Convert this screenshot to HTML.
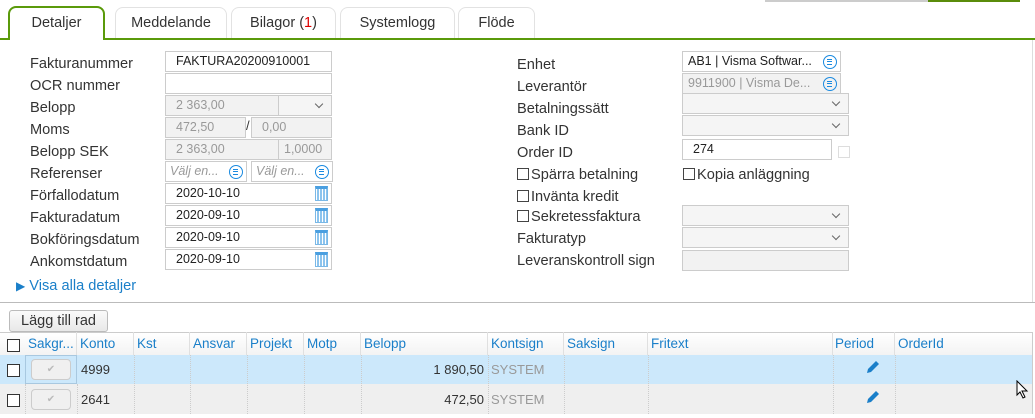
<!DOCTYPE html>
<html><head><meta charset="utf-8"><style>
*{box-sizing:border-box;margin:0;padding:0}
body{width:1035px;height:418px;overflow:hidden;background:#fff;font-family:"Liberation Sans",sans-serif;color:#333;position:relative}
.a{position:absolute}
.tab{position:absolute;top:7px;height:32px;border:1px solid #e2e2e2;border-bottom:none;border-radius:8px 8px 0 0;background:#fff;font-size:14.5px;text-align:center;line-height:31px;color:#333}
.lbl{position:absolute;font-size:14.6px;color:#333;line-height:18px}
.in{position:absolute;height:21px;border:1px solid #ccc;background:#fff;font-size:12.5px;line-height:19px;padding-left:10px;color:#222}
.dis{background:#f2f2f2;color:#999}
.sel::after{content:"";position:absolute;right:9px;top:5px;width:5px;height:5px;border-right:1px solid #666;border-bottom:1px solid #666;transform:rotate(45deg)}
.ic{position:absolute;right:3px;top:3px;width:14px;height:14px;border:1.5px solid #1a8ae0;border-radius:50%}
.ic::before{content:"";position:absolute;left:3px;top:3px;width:5px;height:4px;border-top:1px solid #1a8ae0;border-bottom:1px solid #1a8ae0}
.ic::after{content:"";position:absolute;left:3px;top:5px;width:5px;border-top:1px solid #1a8ae0}
.cal{position:absolute;right:3px;top:2px;width:13px;height:15px;border:1px solid #7ab8e6;border-top:3px solid #4a9fe0;background:repeating-linear-gradient(90deg,#fff 0 1px,#8cc4ee 1px 3px)}
.cb{display:inline-block;width:12px;height:12px;border:1px solid #444;vertical-align:-1px;margin-right:2px}
.th{position:absolute;top:332px;height:23px;font-size:13.5px;color:#1a7fc9;line-height:23px;padding-left:3px;border-right:1px solid #e0e0e0}
.bcb{position:absolute;width:13px;height:13px;border:1px solid #333;background:#fff}
.chk{position:absolute;left:31px;width:40px;height:21px;border:1px solid #ccc;border-radius:4px;background:#f0f0f0;color:#bbb;font-size:10px;text-align:center;line-height:19px}
.pen{position:absolute;left:865px}
.v{position:absolute;top:355px;width:1px;height:59px;border-left:1px dotted #ccc}
.t{position:absolute;font-size:13px;line-height:29px}
</style></head><body>
<div class="a" style="left:765px;top:0;width:163px;height:2px;background:#ccc"></div>
<div class="a" style="left:928px;top:0;width:92px;height:2px;background:#5a8c0a"></div>

<div class="tab" style="left:115px;width:112px">Meddelande</div>
<div class="tab" style="left:231px;width:105px">Bilagor (<span style="color:#d00">1</span>)</div>
<div class="tab" style="left:340px;width:115px">Systemlogg</div>
<div class="tab" style="left:458px;width:77px">Flöde</div>
<div class="a" style="left:0;top:38px;width:1035px;height:2px;background:#5a9a0a"></div>
<div class="tab" style="left:8px;width:97px;top:6px;height:34px;border:2px solid #5a9a0a;border-bottom:none;background:#fff">Detaljer</div>
<div class="a" style="left:1032px;top:40px;width:1px;height:262px;background:#ddd"></div>

<div class="lbl" style="left:30px;top:55px">Fakturanummer</div>
<div class="lbl" style="left:30px;top:77px">OCR nummer</div>
<div class="lbl" style="left:30px;top:99px">Belopp</div>
<div class="lbl" style="left:30px;top:121px">Moms</div>
<div class="lbl" style="left:30px;top:143px">Belopp SEK</div>
<div class="lbl" style="left:30px;top:165px">Referenser</div>
<div class="lbl" style="left:30px;top:187px">Förfallodatum</div>
<div class="lbl" style="left:30px;top:209px">Fakturadatum</div>
<div class="lbl" style="left:30px;top:231px">Bokföringsdatum</div>
<div class="lbl" style="left:30px;top:253px">Ankomstdatum</div>

<div class="in" style="left:165px;top:51px;width:167px">FAKTURA20200910001</div>
<div class="in" style="left:165px;top:73px;width:167px"></div>
<div class="in dis" style="left:165px;top:95px;width:114px">2 363,00</div>
<div class="in dis sel" style="left:278px;top:95px;width:54px;background:#f5f5f5"></div>
<div class="in dis" style="left:165px;top:117px;width:81px">472,50</div>
<div class="a" style="left:246px;top:118px;font-size:13px">/</div>
<div class="in dis" style="left:251px;top:117px;width:81px">0,00</div>
<div class="in dis" style="left:165px;top:139px;width:114px">2 363,00</div>
<div class="in dis" style="left:278px;top:139px;width:54px;padding-left:5px">1,0000</div>
<div class="in" style="left:165px;top:161px;width:82px;padding-left:4px;color:#999;font-style:italic">Välj en...<span class="ic"></span></div>
<div class="in" style="left:251px;top:161px;width:82px;padding-left:4px;color:#999;font-style:italic">Välj en...<span class="ic"></span></div>
<div class="in" style="left:165px;top:183px;width:167px">2020-10-10<span class="cal"></span></div>
<div class="in" style="left:165px;top:205px;width:167px">2020-09-10<span class="cal"></span></div>
<div class="in" style="left:165px;top:227px;width:167px">2020-09-10<span class="cal"></span></div>
<div class="in" style="left:165px;top:249px;width:167px">2020-09-10<span class="cal"></span></div>

<div class="a" style="left:16px;top:278px;font-size:14.6px;color:#1a7fc9"><span style="font-size:12px">▶</span> Visa alla detaljer</div>

<div class="lbl" style="left:517px;top:56px">Enhet</div>
<div class="lbl" style="left:517px;top:78px">Leverantör</div>
<div class="lbl" style="left:517px;top:100px">Betalningssätt</div>
<div class="lbl" style="left:517px;top:122px">Bank ID</div>
<div class="lbl" style="left:517px;top:144px">Order ID</div>
<div class="lbl" style="left:517px;top:166px"><span class="cb"></span>Spärra betalning</div>
<div class="lbl" style="left:683px;top:166px"><span class="cb"></span>Kopia anläggning</div>
<div class="lbl" style="left:517px;top:188px"><span class="cb"></span>Invänta kredit</div>
<div class="lbl" style="left:517px;top:208px"><span class="cb"></span>Sekretessfaktura</div>
<div class="lbl" style="left:517px;top:230px">Fakturatyp</div>
<div class="lbl" style="left:517px;top:252px">Leveranskontroll sign</div>

<div class="in" style="left:682px;top:51px;width:159px;padding-left:5px">AB1 | Visma Softwar...<span class="ic"></span></div>
<div class="in dis" style="left:682px;top:73px;width:159px;padding-left:5px">9911900 | Visma De...<span class="ic"></span></div>
<div class="in dis sel" style="left:682px;top:93px;width:167px;background:#f5f5f5"></div>
<div class="in dis sel" style="left:682px;top:115px;width:167px;background:#f5f5f5"></div>
<div class="in" style="left:682px;top:139px;width:150px">274</div>
<div class="a" style="left:838px;top:146px;width:12px;height:12px;border:1px solid #ddd"></div>
<div class="in dis sel" style="left:682px;top:205px;width:167px;background:#f5f5f5"></div>
<div class="in dis sel" style="left:682px;top:227px;width:167px;background:#f5f5f5"></div>
<div class="in dis" style="left:682px;top:250px;width:167px"></div>

<div class="a" style="left:0;top:302px;width:1035px;height:1px;background:#bbb"></div>
<div class="a" style="left:9px;top:310px;width:99px;height:22px;border:1px solid #bbb;border-radius:3px;background:linear-gradient(#fafafa,#e8e8e8);font-size:14.5px;text-align:center;line-height:20px">Lägg till rad</div>

<div class="a" style="left:0;top:332px;width:1033px;height:23px;background:linear-gradient(#fff,#f3f3f3);border-top:1px solid #ccc;border-right:1px solid #ccc"></div>
<div class="a" style="left:0;top:355px;width:1033px;height:29px;background:#cce8fb"></div>
<div class="a" style="left:0;top:384px;width:1033px;height:30px;background:#efefef"></div>
<div class="a" style="left:1032px;top:332px;width:1px;height:82px;background:#ccc"></div>

<div class="bcb" style="left:7px;top:339px"></div>
<div class="th" style="left:25px;width:52px">Sakgr...</div>
<div class="th" style="left:77px;width:57px">Konto</div>
<div class="th" style="left:134px;width:56px">Kst</div>
<div class="th" style="left:190px;width:57px">Ansvar</div>
<div class="th" style="left:247px;width:57px">Projekt</div>
<div class="th" style="left:304px;width:57px">Motp</div>
<div class="th" style="left:361px;width:127px">Belopp</div>
<div class="th" style="left:488px;width:76px">Kontsign</div>
<div class="th" style="left:564px;width:84px">Saksign</div>
<div class="th" style="left:648px;width:185px">Fritext</div>
<div class="th" style="left:833px;width:62px;padding-left:2px">Period</div>
<div class="th" style="left:895px;width:137px;border-right:none">OrderId</div>

<div class="bcb" style="left:7px;top:364px"></div>
<div class="bcb" style="left:7px;top:394px"></div>
<div class="chk" style="top:359px">✔</div>
<div class="chk" style="top:389px">✔</div>
<div class="a" style="left:25px;top:355px;width:52px;height:29px;border:1px solid #a8c8e0"></div>
<div class="t" style="left:81px;top:355px">4999</div>
<div class="t" style="left:81px;top:385px">2641</div>
<div class="t" style="left:361px;top:355px;width:123px;text-align:right">1 890,50</div>
<div class="t" style="left:361px;top:385px;width:123px;text-align:right">472,50</div>
<div class="t" style="left:491px;top:355px;color:#999">SYSTEM</div>
<div class="t" style="left:491px;top:385px;color:#999">SYSTEM</div>
<div class="v" style="left:134px"></div>
<div class="v" style="left:190px"></div>
<div class="v" style="left:247px"></div>
<div class="v" style="left:304px"></div>
<div class="v" style="left:361px"></div>
<div class="v" style="left:488px"></div>
<div class="v" style="left:564px"></div>
<div class="v" style="left:648px"></div>
<div class="v" style="left:833px"></div>
<div class="v" style="left:895px"></div>
<div class="a" style="left:77px;top:384px;width:1px;height:30px;border-left:1px dotted #ccc"></div>
<div class="a" style="left:25px;top:384px;width:1px;height:30px;border-left:1px dotted #ccc"></div>

<svg class="pen" style="top:359px" width="16" height="16" viewBox="0 0 16 16"><path d="M2 14 L3 10 L11 2 L14 5 L6 13 Z" fill="#1a7fc9"/></svg>
<svg class="pen" style="top:389px" width="16" height="16" viewBox="0 0 16 16"><path d="M2 14 L3 10 L11 2 L14 5 L6 13 Z" fill="#1a7fc9"/></svg>
<svg class="a" style="left:1016px;top:380px" width="14" height="20" viewBox="0 0 14 20"><path d="M1 1 L1 15 L4 12 L7 18 L9 17 L6 11 L11 11 Z" fill="#fff" stroke="#000" stroke-width="1"/></svg>
</body></html>
